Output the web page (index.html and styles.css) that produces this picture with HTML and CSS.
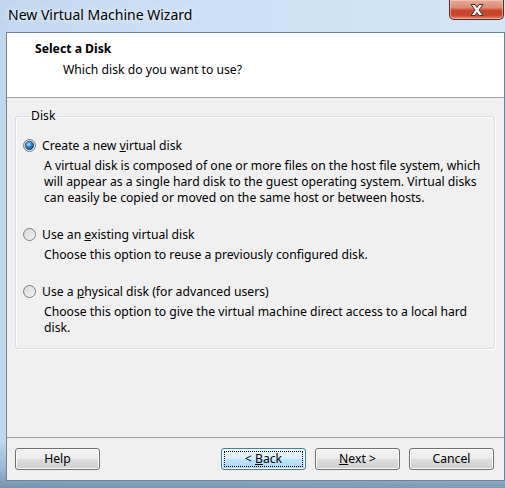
FILE: index.html
```html
<!DOCTYPE html>
<html>
<head>
<meta charset="utf-8">
<link rel="stylesheet" href="styles.css">
</head>
<body>
<div class="window">
  <div class="titlebar">
    <span class="title">New Virtual Machine Wizard</span>
    <div class="close">
      <svg width="20" height="14" viewBox="0 0 20 14">
        <path d="M4 1.5 L8 1.5 L10 4.5 L12 1.5 L16 1.5 L12 7 L16 12.5 L12 12.5 L10 9.5 L8 12.5 L4 12.5 L8 7 Z" fill="#fff" stroke="#4a3030" stroke-width="1" stroke-linejoin="round"/>
      </svg>
    </div>
  </div>
  <div class="client">
    <div class="header">
      <div class="h-title">Select a Disk</div>
      <div class="h-sub">Which disk do you want to use?</div>
    </div>
    <div class="body">
      <fieldset class="group">
        <legend>Disk</legend>
        <div class="option">
          <div class="opt-row">
            <svg class="radio" width="13" height="13" viewBox="0 0 13 13">
              <defs>
                <radialGradient id="rb" cx="0.4" cy="0.35" r="0.7">
                  <stop offset="0" stop-color="#b5e3ff"/>
                  <stop offset="0.45" stop-color="#2f8ad6"/>
                  <stop offset="1" stop-color="#0b3770"/>
                </radialGradient>
                <linearGradient id="rf" x1="0" y1="0" x2="1" y2="1">
                  <stop offset="0" stop-color="#d2d2d2"/>
                  <stop offset="1" stop-color="#ffffff"/>
                </linearGradient>
              </defs>
              <circle cx="6.5" cy="6.5" r="6" fill="url(#rf)" stroke="#7a7a7a"/>
              <circle cx="6.5" cy="6.5" r="4.2" fill="url(#rb)" stroke="#16467c" stroke-width="0.7"/>
            </svg>
            <span>Create a new <u>v</u>irtual disk</span>
          </div>
          <p class="desc">A virtual disk is composed of one or more files on the host file system, which<br>will appear as a single hard disk to the guest operating system. Virtual disks<br>can easily be copied or moved on the same host or between hosts.</p>
        </div>
        <div class="option">
          <div class="opt-row">
            <svg class="radio" width="13" height="13" viewBox="0 0 13 13">
              <defs>
                <linearGradient id="rf2" x1="0" y1="0" x2="1" y2="1">
                  <stop offset="0" stop-color="#d0d0d0"/>
                  <stop offset="1" stop-color="#fbfbfb"/>
                </linearGradient>
              </defs>
              <circle cx="6.5" cy="6.5" r="6" fill="url(#rf2)" stroke="#7f7f7f"/>
              <circle cx="6.5" cy="6.5" r="4" fill="none" stroke="#e6e6e6" stroke-width="0.8"/>
            </svg>
            <span>Use an <u>e</u>xisting virtual disk</span>
          </div>
          <p class="desc">Choose this option to reuse a previously configured disk.</p>
        </div>
        <div class="option">
          <div class="opt-row">
            <svg class="radio" width="13" height="13" viewBox="0 0 13 13">
              <circle cx="6.5" cy="6.5" r="6" fill="url(#rf2)" stroke="#7f7f7f"/>
              <circle cx="6.5" cy="6.5" r="4" fill="none" stroke="#e6e6e6" stroke-width="0.8"/>
            </svg>
            <span>Use a <u>p</u>hysical disk (for advanced users)</span>
          </div>
          <p class="desc">Choose this option to give the virtual machine direct access to a local hard<br>disk.</p>
        </div>
      </fieldset>
    </div>
    <div class="footer">
      <button class="btn">Help</button>
      <div class="spacer"></div>
      <button class="btn focused">&lt; <u>B</u>ack</button>
      <button class="btn"><u>N</u>ext &gt;</button>
      <button class="btn">Cancel</button>
    </div>
  </div>
</div>
</body>
</html>
```

FILE: styles.css
```css
html, body {
  margin: 0;
  padding: 0;
}
body {
  width: 505px;
  height: 488px;
  overflow: hidden;
  font-family: "Noto Sans", "Open Sans", sans-serif;
  font-size: 12.2px;
  color: #000;
}
.window {
  width: 505px;
  height: 488px;
  display: flex;
  flex-direction: column;
  background:
    linear-gradient(to bottom, rgba(0,0,0,0) 440px, rgba(70,120,160,0.35) 470px, rgba(40,80,110,0.5) 488px),
    linear-gradient(to right, #c0d7ee 0px, #cadff4 150px, #d3e6f8 505px);
}
.titlebar {
  height: 32px;
  display: flex;
  align-items: flex-start;
  flex-shrink: 0;
}
.title {
  margin-left: 8px;
  margin-top: 6px;
  font-size: 14px;
  line-height: 18px;
  color: #000;
  text-shadow: 0 0 8px #eaf3fc, 0 0 4px #eaf3fc;
}
.close {
  margin-left: auto;
  margin-right: 1px;
  width: 55px;
  height: 20px;
  box-sizing: border-box;
  border: 1px solid #5b2a22;
  border-top: none;
  border-radius: 0 0 5px 5px;
  background: linear-gradient(to bottom, #e9a999 0%, #de8a75 40%, #c9452b 55%, #c8472c 80%, #e08a6c 100%);
  display: flex;
  align-items: center;
  justify-content: center;
  box-shadow: inset 0 0 0 1px rgba(255,220,210,0.5);
}
.client {
  margin-left: 6px;
  width: 499px;
  height: 449px;
  box-sizing: border-box;
  border: 1px solid #6f8296;
  background: #f0f0f0;
  display: flex;
  flex-direction: column;
}
.header {
  box-sizing: border-box;
  height: 65px;
  background: #fff;
  border-bottom: 1px solid #a0a0a0;
  padding: 8px 0 0 28px;
  flex-shrink: 0;
}
.h-title {
  font-weight: bold;
  line-height: 16px;
}
.h-sub {
  margin-top: 5px;
  margin-left: 28px;
  line-height: 16px;
}
.body {
  flex: 1;
  padding-top: 10px;
}
.group {
  margin: 0 9px 0 8px;
  padding: 13px 0 12px 7px;
  border: 1px solid #d5dfe5;
  border-radius: 3px;
  box-shadow: inset 1px 1px 0 #fff, 1px 1px 0 #fff;
}
.group legend {
  margin-left: 6px;
  padding: 0 2px;
  line-height: 16px;
}
.option + .option {
  margin-top: 20px;
}
.opt-row {
  display: flex;
  align-items: center;
  height: 16px;
}
.radio {
  flex-shrink: 0;
  margin-right: 6px;
}
.desc {
  margin: 5px 0 0 21px;
  line-height: 16px;
}
.footer {
  height: 43px;
  box-sizing: border-box;
  border-top: 1px solid #a0a0a0;
  padding: 10px 10px 0 8px;
  display: flex;
  align-items: flex-start;
  gap: 9px;
  flex-shrink: 0;
}
.spacer {
  flex: 1;
}
.btn {
  width: 85px;
  height: 22px;
  box-sizing: border-box;
  border: 1px solid #707070;
  border-radius: 3px;
  background: linear-gradient(to bottom, #f2f2f2 0%, #ebebeb 48%, #dddddd 52%, #cfcfcf 100%);
  box-shadow: inset 0 0 0 1px #fcfcfc;
  font-family: "Noto Sans", "Open Sans", sans-serif;
  font-size: 12.2px;
  line-height: 16px;
  color: #000;
  padding: 0;
}
.btn.focused {
  border-color: #3c7fb1;
  background: linear-gradient(to bottom, #eaf6fd 0%, #d9f0fc 48%, #bee6fd 52%, #a7d9f5 100%);
  outline: 1px dotted #000;
  outline-offset: -4px;
}
```
